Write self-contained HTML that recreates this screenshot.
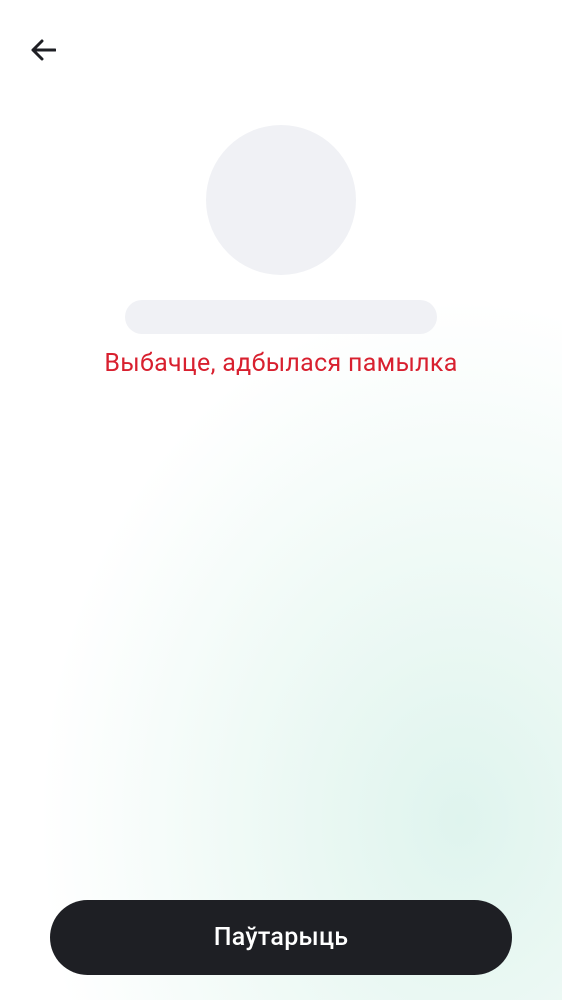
<!DOCTYPE html>
<html><head><meta charset="utf-8"><style>
html,body{margin:0;padding:0}
body{width:562px;height:1000px;position:relative;overflow:hidden;font-family:"Roboto","Liberation Sans",sans-serif;
background:radial-gradient(ellipse 420px 520px at 460px 820px,#dff4ee 0%,#eaf8f3 35%,rgba(255,255,255,0) 100%),#fff;}
.circle{position:absolute;left:206px;top:125px;width:150px;height:150px;border-radius:50%;background:#f0f1f5}
.bar{position:absolute;left:125px;top:300px;width:312px;height:34px;border-radius:17px;background:#f0f1f5}
.err{position:absolute;left:0;width:562px;top:349px;text-align:center;color:#d8202f;font-size:25px;letter-spacing:0.3px}
.btn{position:absolute;left:50px;top:900px;width:462px;height:75px;border-radius:38px;background:#1e1f24;color:#fff;font-size:25px;font-weight:500;text-align:center;line-height:75px;letter-spacing:0.3px}
</style></head><body>
<svg style="position:absolute;left:30px;top:38px" width="26" height="24" viewBox="0 0 26 24"><path d="M25 12H3M12 3L3 12L12 21" stroke="#1e1f24" stroke-width="3" fill="none" stroke-linecap="round" stroke-linejoin="round"/></svg>
<div class="circle"></div>
<div class="bar"></div>
<div class="err">Выбачце, адбылася памылка</div>
<div class="btn">Паўтарыць</div>
</body></html>
